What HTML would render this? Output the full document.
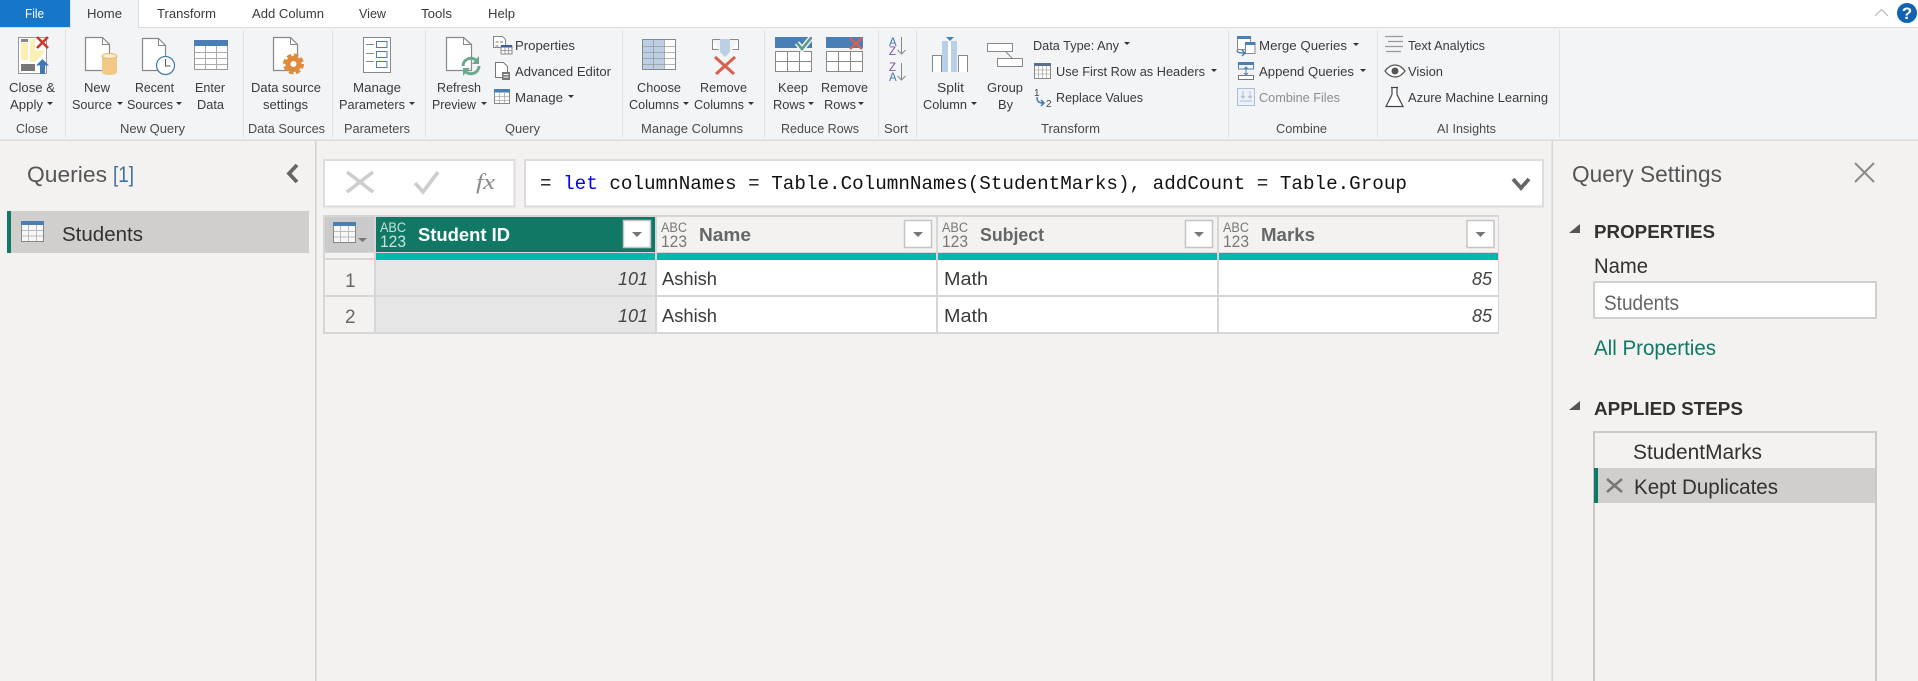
<!DOCTYPE html>
<html><head><meta charset="utf-8"><title>Power Query Editor</title>
<style>
html,body{margin:0;padding:0;width:1918px;height:681px;overflow:hidden;background:#f3f2f1}
svg{display:block}
text{font-family:"Liberation Sans",sans-serif;fill:#323130}
.l{font-size:13px;fill:#4a4a4a}
.t{font-size:13px;fill:#3a3a3a}
.m{font-family:"Liberation Mono",monospace;font-size:19px;fill:#111}
.h{font-size:18px;font-weight:bold;fill:#666}
.c{font-size:18.500px;fill:#3a3a3a}
.i{font-size:18px;font-style:italic;fill:#444}
.abc{font-size:13.500px;fill:#777}
.n123{font-size:17px;fill:#777}
.b{font-size:18.500px;font-weight:bold;fill:#323130}
.s{font-size:21px;fill:#323130}
</style></head><body>
<svg width="1918" height="681" viewBox="0 0 1918 681" xmlns="http://www.w3.org/2000/svg">
<rect width="1918" height="681" fill="#f3f2f1"/>
<!-- tab strip -->
<rect width="1918" height="27" fill="#fff"/>
<rect y="27" width="1918" height="1.5" fill="#dcdcdc"/>
<rect x="0" y="28" width="1918" height="112" fill="#f3f4f6"/>
<rect y="139.500" width="1918" height="1.500" fill="#dcdcdc"/>
<rect width="70" height="27" fill="#1677c9"/>
<rect x="70" width="68.500" height="28.500" fill="#f3f4f6"/>
<rect x="70" width="1" height="28" fill="#e0e0e0"/><rect x="138" width="1" height="28" fill="#dcdcdc"/>
<text x="25" y="18" class="t" style="fill:#fff" textLength="19" lengthAdjust="spacingAndGlyphs">File</text>
<text x="87" y="18" class="t" textLength="35" lengthAdjust="spacingAndGlyphs">Home</text>
<text x="157" y="18" class="t" textLength="59" lengthAdjust="spacingAndGlyphs">Transform</text>
<text x="252" y="18" class="t" textLength="72" lengthAdjust="spacingAndGlyphs">Add Column</text>
<text x="359" y="18" class="t" textLength="27" lengthAdjust="spacingAndGlyphs">View</text>
<text x="421" y="18" class="t" textLength="31" lengthAdjust="spacingAndGlyphs">Tools</text>
<text x="488" y="18" class="t" textLength="27" lengthAdjust="spacingAndGlyphs">Help</text>
<path d="M1875 16l6.500-6.500 6.500 6.500" fill="none" stroke="#b8b8b8" stroke-width="1.200"/>
<circle cx="1907" cy="13" r="10" fill="#0f63b5"/>
<text x="1907" y="19" text-anchor="middle" style="font-size:17px;font-weight:bold;fill:#fff">?</text>
<!-- group separators -->
<g fill="#e0e1e3"><rect x="65" y="30" width="1" height="107"/><rect x="243" y="30" width="1" height="107"/><rect x="332" y="30" width="1" height="107"/><rect x="425" y="30" width="1" height="107"/><rect x="622" y="30" width="1" height="107"/><rect x="764" y="30" width="1" height="107"/><rect x="878" y="30" width="1" height="107"/><rect x="916" y="30" width="1" height="107"/><rect x="1228" y="30" width="1" height="107"/><rect x="1377" y="30" width="1" height="107"/><rect x="1559" y="30" width="1" height="107"/></g>
<!-- ribbon labels -->
<g>
<text x="9" y="92" class="t" textLength="46" lengthAdjust="spacingAndGlyphs">Close &amp;</text>
<text x="10" y="109" class="t" textLength="33" lengthAdjust="spacingAndGlyphs">Apply</text>
<text x="84" y="92" class="t" textLength="26" lengthAdjust="spacingAndGlyphs">New</text>
<text x="72" y="109" class="t" textLength="40" lengthAdjust="spacingAndGlyphs">Source</text>
<text x="135" y="92" class="t" textLength="39" lengthAdjust="spacingAndGlyphs">Recent</text>
<text x="127" y="109" class="t" textLength="46" lengthAdjust="spacingAndGlyphs">Sources</text>
<text x="195" y="92" class="t" textLength="30" lengthAdjust="spacingAndGlyphs">Enter</text>
<text x="197" y="109" class="t" textLength="27" lengthAdjust="spacingAndGlyphs">Data</text>
<text x="251" y="92" class="t" textLength="70" lengthAdjust="spacingAndGlyphs">Data source</text>
<text x="263" y="109" class="t" textLength="45" lengthAdjust="spacingAndGlyphs">settings</text>
<text x="353" y="92" class="t" textLength="48" lengthAdjust="spacingAndGlyphs">Manage</text>
<text x="339" y="109" class="t" textLength="66" lengthAdjust="spacingAndGlyphs">Parameters</text>
<text x="437" y="92" class="t" textLength="44" lengthAdjust="spacingAndGlyphs">Refresh</text>
<text x="432" y="109" class="t" textLength="44" lengthAdjust="spacingAndGlyphs">Preview</text>
<text x="515" y="50" class="t" textLength="60" lengthAdjust="spacingAndGlyphs">Properties</text>
<text x="515" y="76" class="t" textLength="96" lengthAdjust="spacingAndGlyphs">Advanced Editor</text>
<text x="515" y="102" class="t" textLength="48" lengthAdjust="spacingAndGlyphs">Manage</text>
<text x="637" y="92" class="t" textLength="44" lengthAdjust="spacingAndGlyphs">Choose</text>
<text x="629" y="109" class="t" textLength="50" lengthAdjust="spacingAndGlyphs">Columns</text>
<text x="700" y="92" class="t" textLength="47" lengthAdjust="spacingAndGlyphs">Remove</text>
<text x="694" y="109" class="t" textLength="50" lengthAdjust="spacingAndGlyphs">Columns</text>
<text x="778" y="92" class="t" textLength="30" lengthAdjust="spacingAndGlyphs">Keep</text>
<text x="773" y="109" class="t" textLength="32" lengthAdjust="spacingAndGlyphs">Rows</text>
<text x="821" y="92" class="t" textLength="47" lengthAdjust="spacingAndGlyphs">Remove</text>
<text x="824" y="109" class="t" textLength="32" lengthAdjust="spacingAndGlyphs">Rows</text>
<text x="937" y="92" class="t" textLength="27" lengthAdjust="spacingAndGlyphs">Split</text>
<text x="923" y="109" class="t" textLength="44" lengthAdjust="spacingAndGlyphs">Column</text>
<text x="987" y="92" class="t" textLength="36" lengthAdjust="spacingAndGlyphs">Group</text>
<text x="998" y="109" class="t" textLength="15" lengthAdjust="spacingAndGlyphs">By</text>
<text x="1033" y="50" class="t" textLength="86" lengthAdjust="spacingAndGlyphs">Data Type: Any</text>
<text x="1056" y="76" class="t" textLength="149" lengthAdjust="spacingAndGlyphs">Use First Row as Headers</text>
<text x="1056" y="102" class="t" textLength="87" lengthAdjust="spacingAndGlyphs">Replace Values</text>
<text x="1259" y="50" class="t" textLength="88" lengthAdjust="spacingAndGlyphs">Merge Queries</text>
<text x="1259" y="76" class="t" textLength="95" lengthAdjust="spacingAndGlyphs">Append Queries</text>
<text x="1259" y="102" class="t" style="fill:#8d8d8d" textLength="81" lengthAdjust="spacingAndGlyphs">Combine Files</text>
<text x="1408" y="50" class="t" textLength="77" lengthAdjust="spacingAndGlyphs">Text Analytics</text>
<text x="1408" y="76" class="t" textLength="35" lengthAdjust="spacingAndGlyphs">Vision</text>
<text x="1408" y="102" class="t" textLength="140" lengthAdjust="spacingAndGlyphs">Azure Machine Learning</text>
<text x="16" y="133" class="l" textLength="32" lengthAdjust="spacingAndGlyphs">Close</text>
<text x="120" y="133" class="l" textLength="65" lengthAdjust="spacingAndGlyphs">New Query</text>
<text x="248" y="133" class="l" textLength="77" lengthAdjust="spacingAndGlyphs">Data Sources</text>
<text x="344" y="133" class="l" textLength="66" lengthAdjust="spacingAndGlyphs">Parameters</text>
<text x="505" y="133" class="l" textLength="35" lengthAdjust="spacingAndGlyphs">Query</text>
<text x="641" y="133" class="l" textLength="102" lengthAdjust="spacingAndGlyphs">Manage Columns</text>
<text x="781" y="133" class="l" textLength="78" lengthAdjust="spacingAndGlyphs">Reduce Rows</text>
<text x="884" y="133" class="l" textLength="24" lengthAdjust="spacingAndGlyphs">Sort</text>
<text x="1041" y="133" class="l" textLength="59" lengthAdjust="spacingAndGlyphs">Transform</text>
<text x="1276" y="133" class="l" textLength="51" lengthAdjust="spacingAndGlyphs">Combine</text>
<text x="1437" y="133" class="l" textLength="59" lengthAdjust="spacingAndGlyphs">AI Insights</text>
</g>
<!-- carets -->
<g fill="#333">
<path d="M47 102h6l-3 3z"/><path d="M117 102h6l-3 3z"/><path d="M176 102h6l-3 3z"/><path d="M409 102h6l-3 3z"/><path d="M481 102h6l-3 3z"/><path d="M568 95h6l-3 3z"/><path d="M683 102h6l-3 3z"/><path d="M748 102h6l-3 3z"/><path d="M808 102h6l-3 3z"/><path d="M858 102h6l-3 3z"/><path d="M971 102h6l-3 3z"/><path d="M1124 42h6l-3 3z"/><path d="M1211 69h6l-3 3z"/><path d="M1353 43h6l-3 3z"/><path d="M1360 69h6l-3 3z"/>
</g>
<!-- Close & Apply -->
<rect x="18.500" y="37.500" width="28" height="36" fill="#fff" stroke="#999"/>
<rect x="21" y="39" width="7" height="3" fill="#888"/>
<path d="M21 43h7v17h-7zM30 39h5v12l9-1v3l-9 9h-5z" fill="#fcefb4"/>
<rect x="21" y="64" width="14" height="7" fill="#777"/>
<path d="M37 37l11 11M48 37l-11 11" stroke="#c8382b" stroke-width="2.600" fill="none"/>
<path d="M42.500 59l6.500 6.500h-4V74h-5v-8.500h-4z" fill="#3f78b3"/>
<!-- docs -->
<g fill="#fff" stroke="#888" stroke-width="1.200">
<path d="M85.500 37.500h17l7 7v26h-24z"/><path d="M142.500 38.500h16l7 7v25h-23z"/><path d="M273.500 37.500h17l7 7v26h-24z"/><path d="M446.500 37.500h17l8 7v26h-25z"/>
</g>
<g fill="none" stroke="#888"><path d="M102.500 37.500v7h7"/><path d="M158.500 38.500v7h7"/><path d="M290.500 37.500v7h7"/><path d="M463.500 37.500v7h8"/></g>
<path d="M102 56c0-4 15-4 15 0v16c0 4-15 4-15 0z" fill="#f0c987"/><ellipse cx="109.500" cy="56" rx="7.500" ry="2.400" fill="#fff1cf" stroke="#e2b56b"/>
<circle cx="165.500" cy="65.500" r="9" fill="#fff" stroke="#4a7fb5" stroke-width="1.300"/><path d="M165.500 59v7h5" fill="none" stroke="#555"/>
<!-- Enter data -->
<rect x="194.500" y="40.500" width="33" height="29" fill="#fff" stroke="#999"/><rect x="194" y="40" width="34" height="6" fill="#4a7fb5"/>
<path d="M205.500 46v23M216.500 46v23M195 52.500h32M195 58.500h32M195 64.500h32" stroke="#aaa" fill="none"/>
<!-- Gear -->
<circle cx="293.500" cy="64" r="5.500" fill="none" stroke="#e08a3c" stroke-width="5"/>
<circle cx="293.500" cy="64" r="9" fill="none" stroke="#e08a3c" stroke-width="3" stroke-dasharray="4.500 2.570"/>
<!-- Manage parameters -->
<rect x="363.500" y="37.500" width="27" height="35" fill="#fff" stroke="#888"/>
<g fill="#fff" stroke="#4a7fb5"><rect x="376.500" y="41.500" width="10.500" height="6"/><rect x="376.500" y="51.500" width="10.500" height="6"/><rect x="376.500" y="61.500" width="10.500" height="6"/></g>
<path d="M366 44.500h8M366 53.500h8M366 61.500h8" stroke="#888"/>
<!-- Refresh arrows -->
<path d="M463 66a8 8 0 0 1 14-5M479 66a8 8 0 0 1-14 5" fill="none" stroke="#6aa88f" stroke-width="3"/><path d="M479 56v8h-7zM463 76v-8h7z" fill="#6aa88f"/>
<!-- Query small icons -->
<path d="M493.500 36.500h9l3 3v8h-12z" fill="#fff" stroke="#888"/><path d="M495.500 42h3M495.500 46h3M500 42h3" stroke="#777"/>
<rect x="501" y="46" width="11" height="8" fill="#fff" stroke="#888"/><rect x="501" y="45" width="11" height="2.500" fill="#3f5f8f"/><path d="M505 47v7M508.500 47v7M501 50.500h11" stroke="#888" stroke-width=".8"/>
<path d="M495.500 62.500h8l4 4v11h-12z" fill="#fff" stroke="#777"/><rect x="502" y="72" width="8" height="8" fill="#777"/><path d="M503.500 74.500h5M503.500 77h5" stroke="#fff"/>
<rect x="494.500" y="89.500" width="15" height="14" fill="#fff" stroke="#888"/><rect x="494" y="89" width="16" height="3.500" fill="#4a7fb5"/><path d="M499.500 92v11M504.500 92v11M495 96.500h14M495 100.500h14" stroke="#aaa" stroke-width=".8"/>
<!-- Choose columns -->
<rect x="642.500" y="39.500" width="33" height="30" fill="#fff" stroke="#888"/><rect x="643" y="40" width="21" height="29" fill="#bcd0e5"/>
<path d="M653.500 40v29M664.500 40v29M643 46.500h32M643 52.500h32M643 58.500h32M643 64.500h32" stroke="#999" stroke-width=".8"/>
<!-- Remove columns -->
<path d="M712.500 39.500v10h6M738.500 39.500v10h-6M712.500 39.500h26" fill="#fff" stroke="#888"/><path d="M720 39h10v13l-5 5-5-5z" fill="#bcd0e5"/>
<path d="M715 57l19 17M735 57l-19 17" stroke="#d9604a" stroke-width="3" fill="none"/>
<!-- Keep rows -->
<rect x="775" y="37" width="37" height="11" fill="#4a7fb5"/><g fill="#fff" stroke="#888"><rect x="775.500" y="51.500" width="36" height="20"/></g><path d="M787.500 51v20M799.500 51v20M776 61.500h35" stroke="#888"/>
<path d="M797 43l5 6 9-11" fill="none" stroke="#f3f4f6" stroke-width="5.500"/><path d="M797 43l5 6 9-11" fill="none" stroke="#5c9c85" stroke-width="2.600"/>
<!-- Remove rows -->
<rect x="826" y="37" width="37" height="11" fill="#4a7fb5"/><g fill="#fff" stroke="#888"><rect x="826.500" y="51.500" width="36" height="20"/></g><path d="M838.500 51v20M850.500 51v20M827 61.500h35" stroke="#888"/>
<path d="M850 38l12 11M862 38l-12 11" stroke="#d9604a" stroke-width="2.400" fill="none"/>
<!-- Sort -->
<text x="889" y="46" style="font-size:11.500px;fill:#3f78b3">A</text><text x="889" y="55" style="font-size:11.500px;fill:#7e4ea3">Z</text>
<text x="889" y="71" style="font-size:11.500px;fill:#7e4ea3">Z</text><text x="889" y="81" style="font-size:11.500px;fill:#3f78b3">A</text>
<path d="M901.500 37v17M897.500 50l4 4 4-4M901.500 63v17M897.500 76l4 4 4-4" fill="none" stroke="#888"/>
<!-- Split -->
<path d="M932.500 72V55.500h9V72M958.500 72V55.500h9V72" fill="#fff" stroke="#888"/>
<rect x="942" y="41" width="6" height="31" fill="#b9cfe5"/><rect x="948" y="41" width="3" height="31" fill="#fff"/><rect x="951" y="41" width="6" height="31" fill="#b9cfe5"/><path d="M946 37h8l-4 4z" fill="#4a7fb5"/>
<!-- Group by -->
<rect x="987.500" y="43.500" width="25" height="8" fill="#fff" stroke="#888"/><rect x="997.500" y="58.500" width="25" height="8" fill="#fff" stroke="#888"/><path d="M1006 52l6 6" stroke="#888"/>
<!-- First row -->
<rect x="1034.500" y="63.500" width="16" height="15" fill="#fff" stroke="#888"/><rect x="1034" y="63" width="17" height="3" fill="#5a6f8f"/><path d="M1038.500 66v12M1042.500 66v12M1046.500 66v12M1035 70h15M1035 74h15" stroke="#aaa" stroke-width=".8"/>
<!-- Replace -->
<text x="1034" y="96" style="font-size:10px;fill:#444">1</text><text x="1046" y="107" style="font-size:10px;fill:#444">2</text><path d="M1037 97c0 5 2 6 7 6M1041 100l3 3-3 3" fill="none" stroke="#3f78b3" stroke-width="1.500"/>
<!-- Merge -->
<rect x="1237.500" y="36.500" width="13" height="13" fill="#fff" stroke="#888"/><rect x="1237" y="36" width="14" height="3" fill="#4a7fb5"/><rect x="1245.500" y="43.500" width="9.500" height="10" fill="#fff" stroke="#888"/><rect x="1245" y="42" width="10.500" height="3" fill="#4a7fb5"/><path d="M1237 50c0 3 3 3 8 3M1242 50l3 3-3 3" fill="none" stroke="#3f78b3" stroke-width="1.300"/>
<!-- Append -->
<rect x="1238" y="62" width="16" height="3" fill="#4a7fb5"/><rect x="1238.500" y="75.500" width="15" height="4" fill="#fff" stroke="#777"/><path d="M1238.500 65v4h15v-4M1246 67v8M1244 69l2-2 2 2M1244 73l2 2 2-2" fill="none" stroke="#5a7fa5"/>
<!-- Combine files -->
<rect x="1237.500" y="88.500" width="17" height="17" fill="#eef1f5" stroke="#a8bed6"/><path d="M1243 91v7M1241 96l2 2 2-2M1250 91v7M1248 96l2 2 2-2M1240 101h12" fill="none" stroke="#a8bed6"/>
<!-- AI -->
<path d="M1385 36.500h18M1388 41.500h15M1385 46.500h18M1386 51.500h15" stroke="#999" stroke-width="1.300"/>
<path d="M1385 71c6-8 14-8 20 0-6 8-14 8-20 0z" fill="#fff" stroke="#555" stroke-width="1.300"/><circle cx="1395" cy="71" r="3.500" fill="#555"/>
<path d="M1391 87.500h7M1392 87.500v7l-6 12h17l-6-12v-7" fill="#fff" stroke="#444" stroke-width="1.200"/>
<!-- panes -->
<rect x="315" y="141" width="1.500" height="540" fill="#d0d0d0"/>
<rect x="1551.500" y="141" width="1.500" height="540" fill="#d6d6d6"/>
<text x="27" y="182" style="font-size:22px;fill:#555" textLength="80" lengthAdjust="spacingAndGlyphs">Queries</text>
<text x="113" y="182" style="font-size:22px;fill:#41729f" textLength="21" lengthAdjust="spacingAndGlyphs">[1]</text>
<path d="M297 165l-8 8.500 8 8.500" fill="none" stroke="#666" stroke-width="3.800"/>
<rect x="7" y="211" width="302" height="42" fill="#d0cfcd"/><rect x="7" y="211" width="4" height="42" fill="#117865"/>
<rect x="21.500" y="221.500" width="22" height="20" fill="#f7f7f7" stroke="#888"/><rect x="21" y="221" width="23" height="4" fill="#4a7fb5"/><path d="M28.500 225v16M36.500 225v16M22 230.500h21M22 236h21" stroke="#bbb"/>
<text x="62" y="241" style="font-size:20px" textLength="81" lengthAdjust="spacingAndGlyphs">Students</text>
<!-- formula bar -->
<rect x="324" y="160" width="190.500" height="46.500" fill="#fff" stroke="#dcdcdc" stroke-width="2"/>
<path d="M347 172l26 20M373 172l-26 20" stroke="#cdcdcd" stroke-width="3.600" fill="none"/>
<path d="M415 183l8 9 15-20" stroke="#cdcdcd" stroke-width="3.600" fill="none"/>
<text x="476" y="189" style="font-family:'Liberation Serif',serif;font-style:italic;font-size:22px;fill:#8a8a8a" textLength="19" lengthAdjust="spacingAndGlyphs">fx</text>
<rect x="525" y="160" width="1018" height="46.500" fill="#fff" stroke="#dcdcdc" stroke-width="2"/>
<text x="540" y="189" class="m" textLength="867" lengthAdjust="spacingAndGlyphs">= <tspan style="fill:#0000ff">let</tspan> columnNames = Table.ColumnNames(StudentMarks), addCount = Table.Group</text>
<path d="M1513 179l8 9 8-9" fill="none" stroke="#666" stroke-width="3.800"/>
<!-- table -->
<rect x="323" y="215" width="1176" height="119" fill="#d6d6d6"/>
<rect x="325" y="217" width="49" height="35" fill="#cbcaca"/>
<rect x="325" y="253" width="49" height="5" fill="#f3f2f1"/>
<rect x="325" y="260" width="49" height="35" fill="#f3f2f1"/><rect x="325" y="297" width="49" height="35" fill="#f3f2f1"/>
<rect x="333.500" y="222.500" width="22" height="20" fill="#f7f7f7" stroke="#888"/><rect x="333" y="222" width="23" height="4" fill="#4a7fb5"/><path d="M340.500 226v16M348.500 226v16M334 231.500h21M334 237h21" stroke="#bbb"/><path d="M358 238h9l-4.500 4z" fill="#777"/>
<rect x="376" y="217" width="279" height="35" fill="#117865"/>
<rect x="657" y="217" width="279" height="35" fill="#f3f2f1"/><rect x="938" y="217" width="279" height="35" fill="#f3f2f1"/><rect x="1219" y="217" width="279" height="35" fill="#f3f2f1"/>
<g fill="#01b8aa"><rect x="376" y="253" width="279" height="7"/><rect x="657" y="253" width="279" height="7"/><rect x="938" y="253" width="279" height="7"/><rect x="1219" y="253" width="279" height="7"/></g>
<rect x="376" y="260" width="279" height="35" fill="#e6e6e6"/><rect x="376" y="297" width="279" height="35" fill="#e6e6e6"/>
<g fill="#fff"><rect x="657" y="260" width="279" height="35"/><rect x="657" y="297" width="279" height="35"/><rect x="938" y="260" width="279" height="35"/><rect x="938" y="297" width="279" height="35"/><rect x="1219" y="260" width="279" height="35"/><rect x="1219" y="297" width="279" height="35"/></g>
<!-- header icons -->
<text x="380" y="232" class="abc" style="fill:#c9e3db" textLength="26" lengthAdjust="spacingAndGlyphs">ABC</text><text x="380" y="247" class="n123" style="fill:#c9e3db" textLength="26" lengthAdjust="spacingAndGlyphs">123</text>
<text x="661" y="232" class="abc" textLength="26" lengthAdjust="spacingAndGlyphs">ABC</text><text x="661" y="247" class="n123" textLength="26" lengthAdjust="spacingAndGlyphs">123</text>
<text x="942" y="232" class="abc" textLength="26" lengthAdjust="spacingAndGlyphs">ABC</text><text x="942" y="247" class="n123" textLength="26" lengthAdjust="spacingAndGlyphs">123</text>
<text x="1223" y="232" class="abc" textLength="26" lengthAdjust="spacingAndGlyphs">ABC</text><text x="1223" y="247" class="n123" textLength="26" lengthAdjust="spacingAndGlyphs">123</text>
<text x="418" y="241" class="h" style="fill:#fff" textLength="92" lengthAdjust="spacingAndGlyphs">Student ID</text>
<text x="699" y="241" class="h" textLength="52" lengthAdjust="spacingAndGlyphs">Name</text>
<text x="980" y="241" class="h" textLength="64" lengthAdjust="spacingAndGlyphs">Subject</text>
<text x="1261" y="241" class="h" textLength="54" lengthAdjust="spacingAndGlyphs">Marks</text>
<g fill="#fff" stroke="#c4c4c4" stroke-width="1.500"><rect x="623.500" y="220.500" width="27" height="27"/><rect x="904.500" y="220.500" width="27" height="27"/><rect x="1185.500" y="220.500" width="27" height="27"/><rect x="1467" y="220.500" width="27" height="27"/></g>
<g fill="#777"><path d="M632 232h10l-5 5z"/><path d="M913 232h10l-5 5z"/><path d="M1194 232h10l-5 5z"/><path d="M1475.500 232h10l-5 5z"/></g>
<!-- rows -->
<text x="345" y="287" style="font-size:19px;fill:#666">1</text>
<text x="345" y="323" style="font-size:19px;fill:#666">2</text>
<text x="648" y="285" class="i" text-anchor="end">101</text><text x="648" y="322" class="i" text-anchor="end">101</text>
<text x="662" y="285" class="c" textLength="55" lengthAdjust="spacingAndGlyphs">Ashish</text><text x="662" y="322" class="c" textLength="55" lengthAdjust="spacingAndGlyphs">Ashish</text>
<text x="944" y="285" class="c" textLength="44" lengthAdjust="spacingAndGlyphs">Math</text><text x="944" y="322" class="c" textLength="44" lengthAdjust="spacingAndGlyphs">Math</text>
<text x="1492" y="285" class="i" text-anchor="end">85</text><text x="1492" y="322" class="i" text-anchor="end">85</text>
<!-- query settings -->
<text x="1572" y="182" style="font-size:23px;fill:#555" textLength="150" lengthAdjust="spacingAndGlyphs">Query Settings</text>
<path d="M1855 163l19 19M1874 163l-19 19" stroke="#8a8a8a" stroke-width="2" fill="none"/>
<path d="M1580 224v9h-11z" fill="#555"/>
<text x="1594" y="238" class="b" textLength="121" lengthAdjust="spacingAndGlyphs">PROPERTIES</text>
<text x="1594" y="273" class="s" textLength="54" lengthAdjust="spacingAndGlyphs">Name</text>
<rect x="1594" y="282" width="282" height="36" fill="#fff" stroke="#cfcfcf" stroke-width="2"/>
<text x="1604" y="310" class="s" style="fill:#666" textLength="75" lengthAdjust="spacingAndGlyphs">Students</text>
<text x="1594" y="355" class="s" style="fill:#117865" textLength="122" lengthAdjust="spacingAndGlyphs">All Properties</text>
<path d="M1580 401v9h-11z" fill="#555"/>
<text x="1594" y="415" class="b" textLength="149" lengthAdjust="spacingAndGlyphs">APPLIED STEPS</text>
<rect x="1594" y="432" width="282" height="260" fill="none" stroke="#c8c8c8" stroke-width="2"/>
<text x="1633" y="459" class="s" textLength="129" lengthAdjust="spacingAndGlyphs">StudentMarks</text>
<rect x="1594" y="468" width="281" height="35" fill="#d0cfcd"/><rect x="1594" y="468" width="4" height="35" fill="#117865"/>
<path d="M1607 479l15 13M1622 479l-15 13" stroke="#777" stroke-width="2.500" fill="none"/>
<text x="1634" y="494" class="s" textLength="144" lengthAdjust="spacingAndGlyphs">Kept Duplicates</text>
</svg>
</body></html>
